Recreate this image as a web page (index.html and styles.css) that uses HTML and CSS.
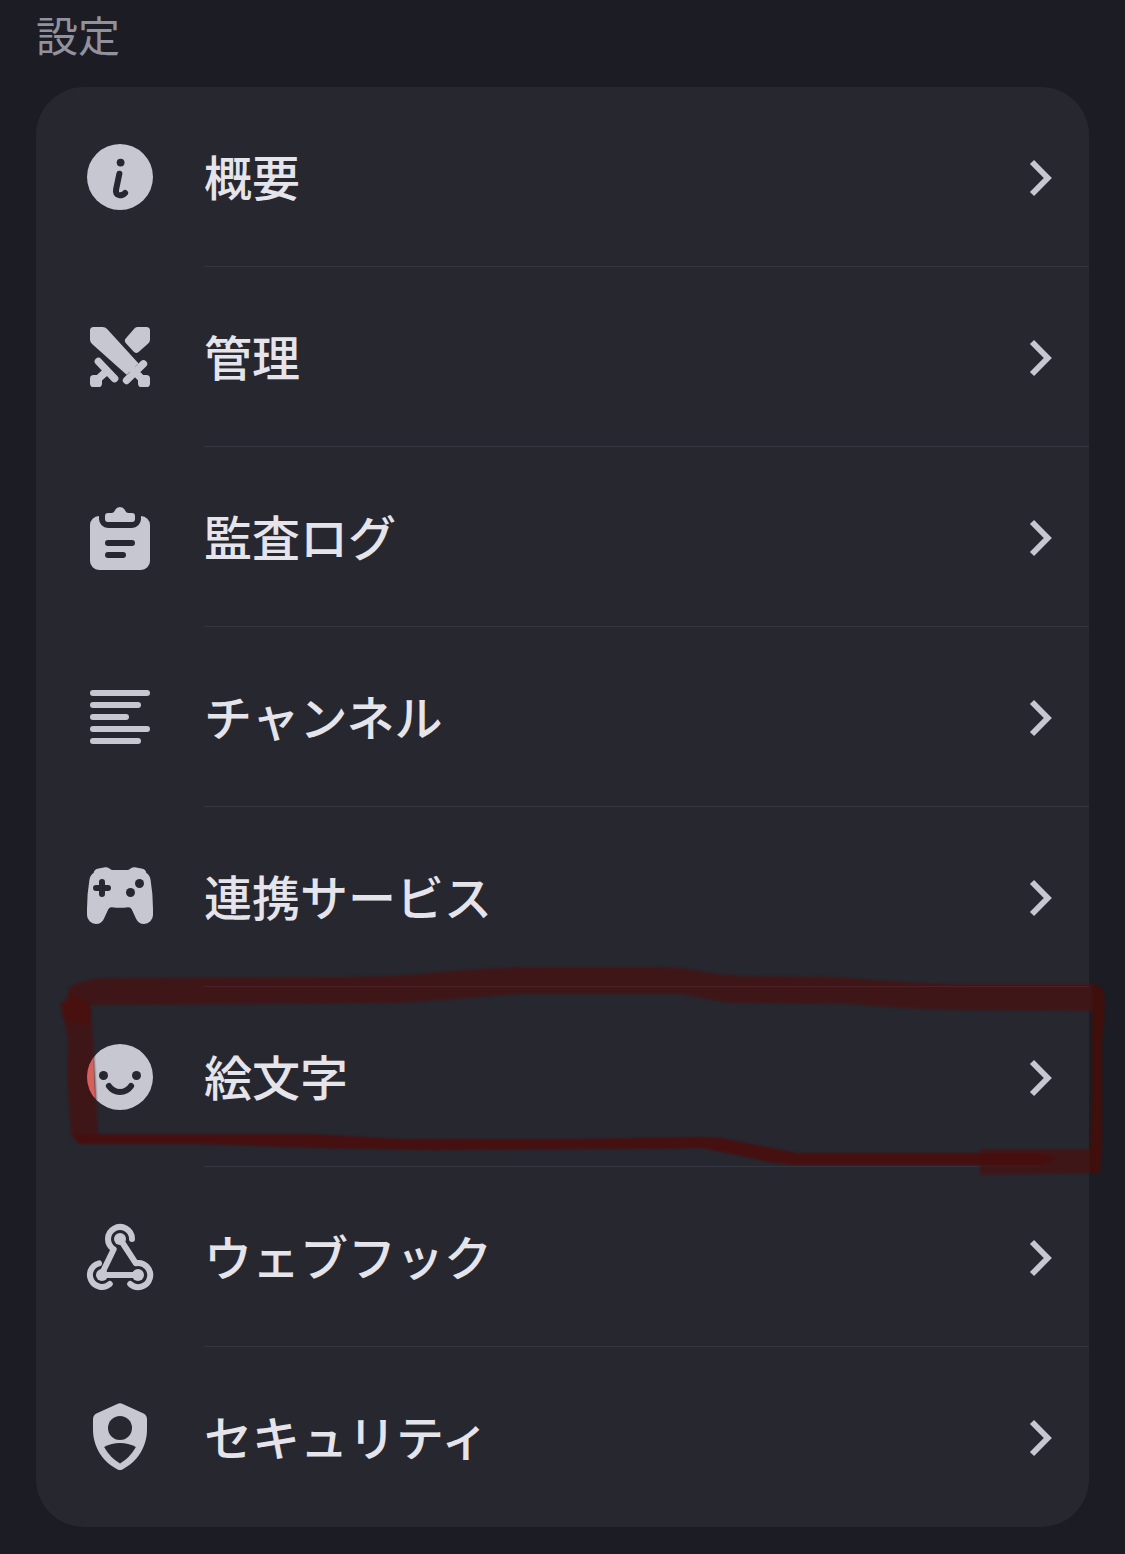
FILE: index.html
```html
<!DOCTYPE html>
<html lang="ja">
<head>
    <meta charset="UTF-8">
    <meta name="viewport" content="width=device-width, initial-scale=1.0">
    <title>設定</title>
    <link rel="stylesheet" href="styles.css">
</head>
<body>
    <div class="page">
        <h1 class="title">設定</h1>
        <div class="card">
            <div class="row">
                <svg class="icon" viewBox="0 0 24 24">
                    <circle cx="12" cy="12" r="11"/>
                    <circle class="cut" cx="12.2" cy="7.2" r="1.3"/>
                    <path class="cut-line" d="M11.8 10.9 10.7 16.1Q10.4 18 11.8 18.1 12.9 18.2 13.7 17.3"/>
                </svg>
                <div class="cell">
                    <span class="label">概要</span>
                    <svg class="chevron" viewBox="0 0 24 40"><path d="M3 5 18.8 21 3 37"/></svg>
                </div>
            </div>
            <div class="row">
                <svg class="icon" viewBox="0 0 24 24">
                    <path d="M2 3.2Q2 2 3.2 2H6.2Q7.1 2 7.7 2.7L18.2 14.2 14.2 17.9 2.7 7.7Q2 7.1 2 6.2Z"/>
                    <path d="M17.7 2H20.8Q22 2 22 3.2V6.2Q22 7 21.4 7.5L18.2 10.3Q17.3 11 16.5 10.2L13.9 7.3Q13.3 6.5 13.9 5.8L16.8 2.5Q17.2 2 17.7 2Z"/>
                    <path class="hilt" d="M19.8 14.3 14.2 19.8M16.5 16.5 19.6 19.6M4.8 13.5 10.2 19.2M7.5 16.8 4.4 19.6"/>
                    <rect x="18" y="18" width="4" height="4" rx="1.2"/>
                    <rect x="2" y="18" width="4" height="4" rx="1.2"/>
                </svg>
                <div class="cell">
                    <span class="label">管理</span>
                    <svg class="chevron" viewBox="0 0 24 40"><path d="M3 5 18.8 21 3 37"/></svg>
                </div>
            </div>
            <div class="row">
                <svg class="icon" viewBox="0 0 24 24">
                    <path d="M8 4H9.2Q9.9 4 10.2 3.3 10.8 2 12 2T13.8 3.3Q14.1 4 14.8 4H16A1 1 0 0 1 17 5V6A1 1 0 0 1 16 7H8A1 1 0 0 1 7 6V5A1 1 0 0 1 8 4Z"/>
                    <path d="M5 5V6A3 3 0 0 0 8 9H16A3 3 0 0 0 19 6V5A3 3 0 0 1 22 8V20A3 3 0 0 1 19 23H5A3 3 0 0 1 2 20V8A3 3 0 0 1 5 5Z"/>
                    <path class="cut-line" d="M8 14H16M8 18H13"/>
                </svg>
                <div class="cell">
                    <span class="label">監査ログ</span>
                    <svg class="chevron" viewBox="0 0 24 40"><path d="M3 5 18.8 21 3 37"/></svg>
                </div>
            </div>
            <div class="row">
                <svg class="icon" viewBox="0 0 24 24">
                    <path class="line" d="M3 4H21M3 8H18M3 12H14M3 16H21M3 20H18"/>
                </svg>
                <div class="cell">
                    <span class="label">チャンネル</span>
                    <svg class="chevron" viewBox="0 0 24 40"><path d="M3 5 18.8 21 3 37"/></svg>
                </div>
            </div>
            <div class="row">
                <svg class="icon" viewBox="0 0 24 24">
                    <path d="M4.5 2.6 7 2.1Q8 1.9 8.6 2.6 9 3 9.6 3H14.4Q15 3 15.4 2.6 16 1.9 17 2.1L19.5 2.6Q20.6 2.9 20.8 4 22 4.8 22.2 6.3Q23 11 23 16V18A3 3 0 0 1 20 21Q18.2 21 17.4 19.3L15.9 16.1Q15.5 15.3 14.7 15.4 12 15.8 9.3 15.4 8.5 15.3 8.1 16.1L6.6 19.3Q5.8 21 4 21A3 3 0 0 1 1 18V16Q1 11 1.8 6.3 2 4.8 3.2 4 3.4 2.9 4.5 2.6Z"/>
                    <path class="cut-line" d="M6 7V11M4 9H8"/>
                    <circle class="cut" cx="18.5" cy="7.5" r="1.5"/>
                    <circle class="cut" cx="15.5" cy="10.5" r="1.5"/>
                </svg>
                <div class="cell">
                    <span class="label">連携サービス</span>
                    <svg class="chevron" viewBox="0 0 24 40"><path d="M3 5 18.8 21 3 37"/></svg>
                </div>
            </div>
            <div class="row">
                <svg class="icon" viewBox="0 0 24 24">
                    <circle cx="12" cy="12" r="11"/>
                    <circle class="cut" cx="6.5" cy="11.5" r="1.5"/>
                    <circle class="cut" cx="17.5" cy="11.5" r="1.5"/>
                    <path class="cut-line" d="M8.3 15Q9.7 17 12 17T15.7 15"/>
                </svg>
                <div class="cell">
                    <span class="label">絵文字</span>
                    <svg class="chevron" viewBox="0 0 24 40"><path d="M3 5 18.8 21 3 37"/></svg>
                </div>
            </div>
            <div class="row">
                <svg class="icon" viewBox="0 0 24 24">
                    <circle cx="12" cy="6" r="2"/>
                    <circle cx="6" cy="18" r="2"/>
                    <circle cx="18" cy="18" r="2"/>
                    <path class="line" d="M16 6A4 4 0 1 0 9.9 9.4L6 17.5M12 6 17.3 14.1A4 4 0 1 1 15.4 21M5 14.1A4 4 0 1 0 8.6 21M6 18H18"/>
                </svg>
                <div class="cell">
                    <span class="label">ウェブフック</span>
                    <svg class="chevron" viewBox="0 0 24 40"><path d="M3 5 18.8 21 3 37"/></svg>
                </div>
            </div>
            <div class="row">
                <svg class="icon" viewBox="0 0 24 24">
                    <path d="M11.1 1Q12 .5 12.9 1L19.7 4.1Q21 4.7 21 6.1V9.5C21 15 18 20.2 12.8 22.8Q12 23.2 11.2 22.8C6 20.2 3 15 3 9.5V6.1Q3 4.7 4.3 4.1Z"/>
                    <circle class="cut" cx="12" cy="9" r="4"/>
                    <path class="cut" d="M6.7 15.3Q9.2 14 12 14T17.3 15.3Q15.3 18.9 12 20.8 8.7 18.9 6.7 15.3Z"/>
                </svg>
                <div class="cell">
                    <span class="label">セキュリティ</span>
                    <svg class="chevron" viewBox="0 0 24 40"><path d="M3 5 18.8 21 3 37"/></svg>
                </div>
            </div>
        </div>

        <!-- hand-drawn marker around the emoji row -->
        <svg class="marker" viewBox="0 0 1125 1554">
            <defs>
                <clipPath id="face"><circle cx="120" cy="1077" r="33"/></clipPath>
            </defs>
            <g class="marker-ink">
                <path class="wide" d="M68 990Q68 983 100 978L330 977Q390 977 430 973T520 967H660Q680 967 700 971T740 976L840 977Q900 983 960 984H1092V1011L960 1010Q900 1009 850 1004L730 1003Q700 998 680 994H520L400 1003 270 1004 92 1005 88 1008 70 1004Z"/>
                <path class="wide" d="M60 1003 88 1003 92 1020 94 1060 98 1136 78 1143 71 1136 67 1080 68 1040Z"/>
                <path class="wide" d="M980 1149H1092V1173L980 1175Z"/>
                <path class="thin" d="M74 1135 98 1134H310L400 1139H580L700 1137 722 1138 797 1153H1040L1060 1158 1040 1165H795L775 1163 703 1148 590 1149 430 1150 320 1148 200 1144H80Z"/>
                <path class="edge" d="M1092 984Q1104 984 1105 1000L1104 1022 1102 1040V1150L1100 1173H1090V1150L1092 1100V1020Z"/>
                <path class="dark" d="M70 992 84 1000 92 1010 88 1026 65 1020 62 1005Z"/>
            </g>
            <path class="divider" d="M204 986.5H1089"/>
            <path class="tint" clip-path="url(#face)" d="M84 1040H93L94 1080 96 1112H84Z"/>
        </svg>
    </div>
</body>
</html>
```

FILE: styles.css
```css
body {
    margin: 0;
    background-color: #1c1c24;
    font-family: "Noto Sans CJK JP", sans-serif;
}
.page {
    position: relative;
    box-sizing: border-box;
    height: 1554px;
    padding: 4px 36px 0;
    overflow: hidden;
}
.title {
    margin: 0 0 23px;
    font-size: 42px;
    line-height: 60px;
    font-weight: 400;
    color: #92929e;
}
.card {
    background-color: #272730;
    border-radius: 48px;
    overflow: hidden;
}
.row {
    display: flex;
    align-items: center;
    height: 180px;
    padding-left: 48px;
}
.icon {
    flex: none;
    width: 72px;
    height: 72px;
    margin-right: 48px;
    fill: #c7c7d1;
}
.cut {
    fill: #272730;
}
.line, .cut-line, .hilt {
    fill: none;
    stroke: #c7c7d1;
    stroke-width: 2;
    stroke-linecap: round;
    stroke-linejoin: round;
}
.hilt {
    stroke-width: 2.5;
}
.cut-line {
    stroke: #272730;
}
.cell {
    display: flex;
    flex: 1;
    align-items: center;
    justify-content: space-between;
    box-sizing: border-box;
    height: 180px;
    padding-right: 36px;
    border-bottom: 1px solid #353540;
}
.row:last-child .cell {
    border-bottom-color: transparent;
}
.label {
    padding-bottom: 4px;
    font-size: 48px;
    line-height: 72px;
    font-weight: 500;
    color: #e4e4ea;
}
.chevron {
    width: 24px;
    height: 40px;
    fill: none;
    stroke: #c7c7d1;
    stroke-width: 5.8;
}
.marker {
    position: absolute;
    top: 0;
    left: 0;
    width: 1125px;
    height: 1554px;
    pointer-events: none;
}
.marker-ink {
    filter: blur(1.2px);
}
.wide {
    fill: #421414;
    fill-opacity: 0.88;
}
.thin {
    fill: #480f0f;
    fill-opacity: 0.95;
}
.edge {
    fill: #420e0b;
    fill-opacity: 0.92;
}
.dark {
    fill: #4d0e0c;
    fill-opacity: 0.7;
}
.divider {
    stroke: #4c2024;
    stroke-width: 1;
}
.tint {
    fill: #d95f5b;
}
```
